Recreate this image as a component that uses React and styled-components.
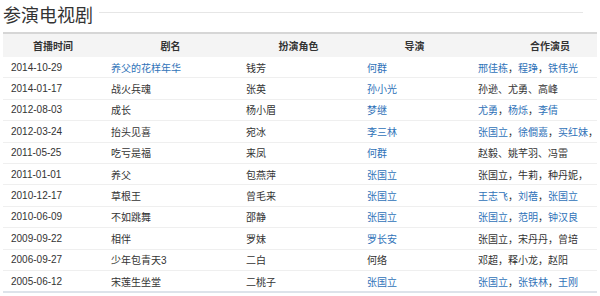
import styled, { createGlobalStyle } from 'styled-components';

const GlobalStyle = createGlobalStyle`
  html, body {
    margin: 0;
    padding: 0;
    overflow: hidden;
    background: #fff;
  }
  body {
    font-family: "Liberation Sans", "Noto Sans CJK SC", sans-serif;
    color: #333;
  }
`;

const Page = styled.div({
  padding: '0 3px',
});

const TitleBar = styled.div({
  display: 'flex',
  alignItems: 'flex-start',
  height: '32px',
  width: '580px',
});

const Title = styled.h2({
  margin: 0,
  fontSize: '18px',
  fontWeight: 'normal',
  lineHeight: '28px',
  color: '#333',
  fontFamily: '"Noto Sans CJK SC", sans-serif',
});

const TitleRule = styled.div({
  flex: 1,
  height: '1px',
  marginTop: '12px',
  marginLeft: '6px',
  backgroundColor: '#e6e6e6',
});

const Table = styled.table({
  width: '100%',
  tableLayout: 'fixed',
  borderCollapse: 'collapse',
  fontSize: '10px',
  borderBottom: '2px solid #dde3ea',
});

const HeadCell = styled.th`
  height: 23px;
  padding: 0 0 0 ${(p) => p.$indent || 0}px;
  text-align: ${(p) => (p.$indent ? 'left' : 'center')};
  font-weight: bold;
  color: #333;
  background-color: #f4f4f4;
  border-top: 2px solid #d6d6d6;
`;

const Row = styled.tr({
  borderBottom: '1px solid #efefef',
  '&:last-child': { borderBottom: 'none' },
});

const Cell = styled.td({
  height: '20.4px',
  padding: '0 0 0 8px',
  whiteSpace: 'nowrap',
  overflow: 'hidden',
  color: '#333',
});

const Link = styled.a({
  color: '#2f72b8',
  textDecoration: 'none',
});

const columns = [
  { title: '首播时间', width: 100 },
  { title: '剧名', width: 135 },
  { title: '扮演角色', width: 121 },
  { title: '导演', width: 111 },
  { title: '合作演员', width: 127, indent: 60 },
];

const rows = [
  { date: '2014-10-29', name: '养父的花样年华', nameLink: true, role: '钱芳', director: '何群', dirLink: true, cast: ['邢佳栋', '程琤', '铁伟光'], castLink: true, sep: '，' },
  { date: '2014-01-17', name: '战火兵魂', role: '张英', director: '孙小光', dirLink: true, cast: ['孙逊', '尤勇', '高峰'], sep: '、' },
  { date: '2012-08-03', name: '成长', role: '杨小眉', director: '梦继', dirLink: true, cast: ['尤勇', '杨烁', '李倩'], castLink: true, sep: '，' },
  { date: '2012-03-24', name: '抬头见喜', role: '宛冰', director: '李三林', dirLink: true, cast: ['张国立', '徐僴嘉', '买红妹'], castLink: true, sep: '，', trail: true },
  { date: '2011-05-25', name: '吃亏是福', role: '来凤', director: '何群', dirLink: true, cast: ['赵毅', '姚芊羽', '冯雷'], sep: '、' },
  { date: '2011-01-01', name: '养父', role: '包燕萍', director: '张国立', dirLink: true, cast: ['张国立', '牛莉', '种丹妮'], sep: '，', trail: true },
  { date: '2010-12-17', name: '草根王', role: '曾毛来', director: '张国立', dirLink: true, cast: ['王志飞', '刘蓓', '张国立'], castLink: true, sep: '，' },
  { date: '2010-06-09', name: '不如跳舞', role: '邵静', director: '张国立', dirLink: true, cast: ['张国立', '范明', '钟汉良'], castLink: true, sep: '，' },
  { date: '2009-09-22', name: '相伴', role: '罗妹', director: '罗长安', dirLink: true, cast: ['张国立', '宋丹丹', '曾培'], sep: '，' },
  { date: '2006-09-27', name: '少年包青天3', role: '二白', director: '何络', cast: ['邓超', '释小龙', '赵阳'], sep: '，' },
  { date: '2005-06-12', name: '宋莲生坐堂', role: '二桃子', director: '张国立', dirLink: true, cast: ['张国立', '张铁林', '王刚'], castLink: true, sep: '，' },
];

function Text({ link, children }) {
  return link ? <Link href="#">{children}</Link> : children;
}

function Cast({ row }) {
  return (
    <>
      {row.cast.map((n, i) => (
        <span key={n}>
          <Text link={row.castLink}>{n}</Text>
          {(i < row.cast.length - 1 || row.trail) && row.sep}
        </span>
      ))}
    </>
  );
}

function App() {
  return (
    <Page>
      <GlobalStyle />
      <TitleBar>
        <Title>参演电视剧</Title>
        <TitleRule />
      </TitleBar>
      <Table>
        <colgroup>
          {columns.map((c) => (
            <col key={c.title} style={{ width: c.width }} />
          ))}
        </colgroup>
        <thead>
          <tr>
            {columns.map((c) => (
              <HeadCell key={c.title} $indent={c.indent}>
                {c.title}
              </HeadCell>
            ))}
          </tr>
        </thead>
        <tbody>
          {rows.map((r) => (
            <Row key={r.date}>
              <Cell>{r.date}</Cell>
              <Cell>
                <Text link={r.nameLink}>{r.name}</Text>
              </Cell>
              <Cell>{r.role}</Cell>
              <Cell>
                <Text link={r.dirLink}>{r.director}</Text>
              </Cell>
              <Cell>
                <Cast row={r} />
              </Cell>
            </Row>
          ))}
        </tbody>
      </Table>
    </Page>
  );
}

export default App;
